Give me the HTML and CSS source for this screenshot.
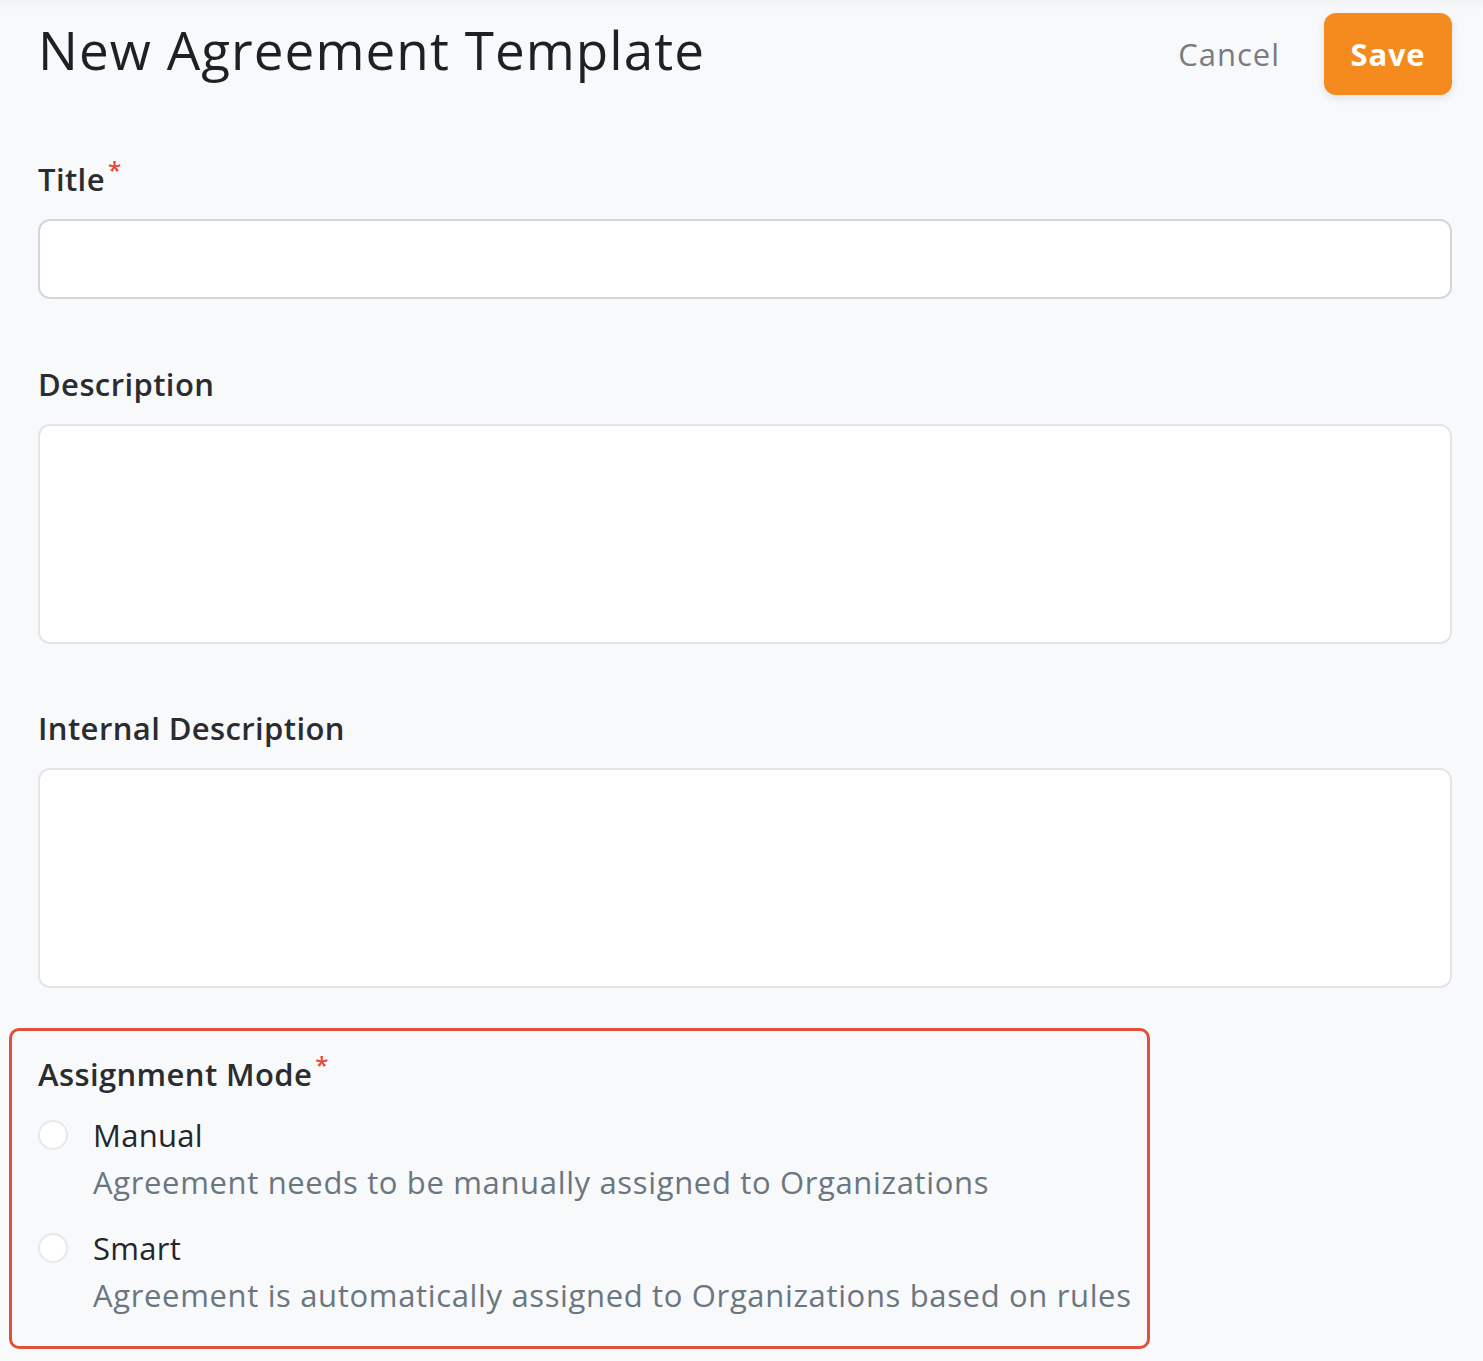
FILE: index.html
```html
<!DOCTYPE html>
<html lang="en">
<head>
<meta charset="utf-8">
<title>New Agreement Template</title>
<link rel="stylesheet" href="styles.css">
</head>
<body>
<div class="topfade"></div>
<main class="page">
  <header class="header">
    <h1 class="title">New Agreement Template</h1>
    <div class="actions">
      <button class="btn-cancel" type="button">Cancel</button>
      <button class="btn-save" type="button">Save</button>
    </div>
  </header>

  <div class="field field-first">
    <label class="label">Title<span class="req">*</span></label>
    <div class="input input-line"></div>
  </div>

  <div class="field">
    <label class="label">Description</label>
    <div class="input input-area"></div>
  </div>

  <div class="field field-last">
    <label class="label">Internal Description</label>
    <div class="input input-area"></div>
  </div>

  <section class="mode-box">
    <div class="label">Assignment Mode<span class="req">*</span></div>
    <div class="option option-first">
      <span class="radio"></span>
      <div class="option-text">
        <div class="option-title">Manual</div>
        <div class="option-desc">Agreement needs to be manually assigned to Organizations</div>
      </div>
    </div>
    <div class="option">
      <span class="radio"></span>
      <div class="option-text">
        <div class="option-title">Smart</div>
        <div class="option-desc">Agreement is automatically assigned to Organizations based on rules</div>
      </div>
    </div>
  </section>
</main>
</body>
</html>
```

FILE: styles.css
```css
* { box-sizing: border-box; }
html, body {
  margin: 0;
  padding: 0;
  background: #f8f9fb;
  font-family: "Open Sans", "Noto Sans", sans-serif;
  color: #1f2125;
}
.topfade {
  height: 10px;
  background: linear-gradient(#f1f2f4, #f8f9fb);
}
.page {
  padding: 3px 31px 0 38px;
}
.header {
  display: flex;
  justify-content: space-between;
  align-items: center;
  height: 82px;
}
.title {
  margin: -10px 0 0 0;
  font-size: 53px;
  font-weight: 400;
  line-height: 1;
  letter-spacing: 1.05px;
  color: #1f2023;
}
.actions {
  display: flex;
  align-items: center;
  gap: 44px;
}
.btn-cancel {
  border: 0;
  background: none;
  font-family: inherit;
  font-size: 31px;
  letter-spacing: 1px;
  color: #7a7c80;
  padding: 0;
}
.btn-save {
  border: 0;
  background: #f58a1f;
  color: #fff;
  font-family: inherit;
  font-weight: 700;
  font-size: 31px;
  letter-spacing: 0.8px;
  width: 128px;
  height: 82px;
  border-radius: 12px;
  box-shadow: 0 3px 8px rgba(0,0,0,0.10);
}
.field { margin-top: 65px; }
.field-first { margin-top: 64px; }
.field-last { margin-top: 64px; }
.label {
  display: block;
  font-size: 31px;
  font-weight: 600;
  line-height: 40px;
  letter-spacing: 0.4px;
  color: #2a2c30;
  height: 40px;
}
.req {
  color: #e5483a;
  font-size: 24px;
  vertical-align: top;
  line-height: 22px;
  margin-left: 3px;
}
.input {
  margin-top: 20px;
  background: #fff;
  border: 2px solid #d3d6db;
  border-radius: 12px;
}
.input-line { height: 80px; }
.input-area { height: 220px; border-color: #e3e5e8; }

.mode-box {
  margin: 40px 0 0 -29px;
  width: 1141px;
  border: 3px solid #e0503c;
  border-radius: 10px;
  padding: 23px 4px 31px 26px;
}
.option {
  display: flex;
  align-items: flex-start;
  gap: 25px;
  margin-top: 26px;
}
.option-first { margin-top: 21px; }
.radio {
  flex: none;
  width: 30px;
  height: 30px;
  border-radius: 50%;
  border: 2px solid #e6e8eb;
  background: #fff;
  margin-top: 5px;
}
.option-title {
  font-size: 31px;
  line-height: 40px;
  letter-spacing: 0.3px;
  color: #23262a;
}
.option-desc {
  margin-top: 7px;
  font-size: 31px;
  line-height: 40px;
  letter-spacing: 0.65px;
  white-space: nowrap;
  color: #6a7680;
}
```
